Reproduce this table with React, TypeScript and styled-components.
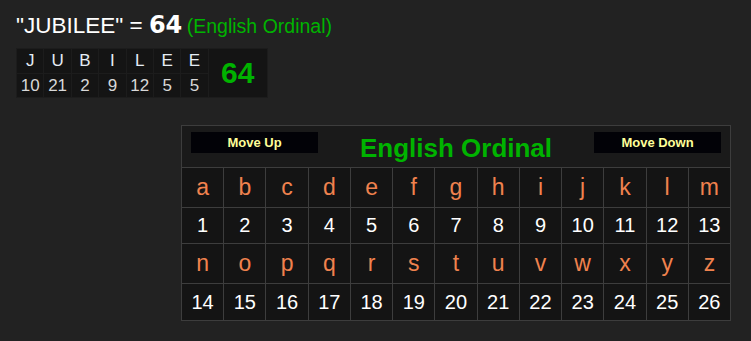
import React from "react";
import styled, { createGlobalStyle } from "styled-components";

const GlobalStyle = createGlobalStyle`
  html, body { margin: 0; padding: 0; }
  body {
    background: #222222;
    font-family: "Liberation Sans", Arial, sans-serif;
    color: #ffffff;
  }
`;

const Page = styled.div`
  padding: 0 0 0 16px;
  width: 751px;
  height: 341px;
  box-sizing: border-box;
  overflow: hidden;
`;

const Heading = styled.div`
  margin-top: 11px;
  height: 28px;
  line-height: 28px;
  white-space: nowrap;
`;

const Phrase = styled.span`
  font-size: 22.5px;
  color: #ffffff;
`;

const Total = styled.span`
  font-family: "DejaVu Sans", Verdana, sans-serif;
  font-weight: bold;
  font-size: 24px;
  color: #ffffff;
`;

const CipherName = styled.span`
  font-size: 19.5px;
  color: #00b300;
`;

const WordTable = styled.div`
  margin-top: 9px;
  display: grid;
  grid-template-columns: repeat(7, 26.4px) 58px;
  grid-template-rows: 24px 23px;
  gap: 1px;
  padding: 1px;
  width: fit-content;
  background: #1c1c1c;
`;

const WordCell = styled.div<{ $top?: boolean }>`
  background: #141414;
  display: flex;
  align-items: center;
  justify-content: center;
  font-size: 17px;
  color: ${(p) => (p.$top ? "#e4ecf4" : "#d8d8d8")};
`;

const WordSum = styled.div`
  grid-column: 8;
  grid-row: 1 / span 2;
  background: #141414;
  display: flex;
  align-items: center;
  justify-content: center;
  font-size: 30px;
  font-weight: bold;
  color: #00b300;
`;

const Panel = styled.div`
  margin: 27px 0 0 165px;
  width: 550px;
  display: grid;
  grid-template-columns: repeat(13, 1fr);
  grid-template-rows: 41px 39px 35px 39px 36px;
  gap: 1px;
  padding: 1px;
  box-sizing: border-box;
  background: #3d3d3d;
`;

const PanelHeader = styled.div`
  grid-column: 1 / -1;
  background: #1a1a1a;
  display: flex;
  justify-content: space-between;
  align-items: flex-start;
  padding: 6px 9px 0;
`;

const MoveButton = styled.div`
  width: 127px;
  height: 21px;
  background: #020207;
  color: #ffff99;
  font-weight: bold;
  font-size: 13px;
  display: flex;
  align-items: center;
  justify-content: center;
`;

const PanelTitle = styled.div`
  flex: 1;
  text-align: center;
  font-size: 26px;
  font-weight: bold;
  color: #00b300;
  line-height: 30px;
  margin-top: 1px;
`;

const LetterCell = styled.div`
  background: #141414;
  display: flex;
  align-items: center;
  justify-content: center;
  font-size: 23px;
  color: #f0824e;
  padding-bottom: 1px;
`;

const NumberCell = styled.div`
  background: #141414;
  display: flex;
  align-items: center;
  justify-content: center;
  font-size: 20px;
  color: #ffffff;
`;

const word = ["J", "U", "B", "I", "L", "E", "E"];
const values = [10, 21, 2, 9, 12, 5, 5];
const alphabet = "abcdefghijklmnopqrstuvwxyz".split("");

export default function App() {
  const rows = [alphabet.slice(0, 13), alphabet.slice(13)];
  return (
    <>
      <GlobalStyle />
      <Page>
        <Heading>
          <Phrase>"JUBILEE" = </Phrase>
          <Total>64</Total> <CipherName>(English Ordinal)</CipherName>
        </Heading>
        <WordTable>
          {word.map((l, i) => (
            <WordCell key={"l" + i} $top>
              {l}
            </WordCell>
          ))}
          <WordSum>64</WordSum>
          {values.map((v, i) => (
            <WordCell key={"v" + i}>{v}</WordCell>
          ))}
        </WordTable>
        <Panel>
          <PanelHeader>
            <MoveButton>Move Up</MoveButton>
            <PanelTitle>English Ordinal</PanelTitle>
            <MoveButton>Move Down</MoveButton>
          </PanelHeader>
          {rows.map((row, r) => (
            <React.Fragment key={r}>
              {row.map((ch) => (
                <LetterCell key={ch}>{ch}</LetterCell>
              ))}
              {row.map((ch) => (
                <NumberCell key={ch + "n"}>
                  {alphabet.indexOf(ch) + 1}
                </NumberCell>
              ))}
            </React.Fragment>
          ))}
        </Panel>
      </Page>
    </>
  );
}
